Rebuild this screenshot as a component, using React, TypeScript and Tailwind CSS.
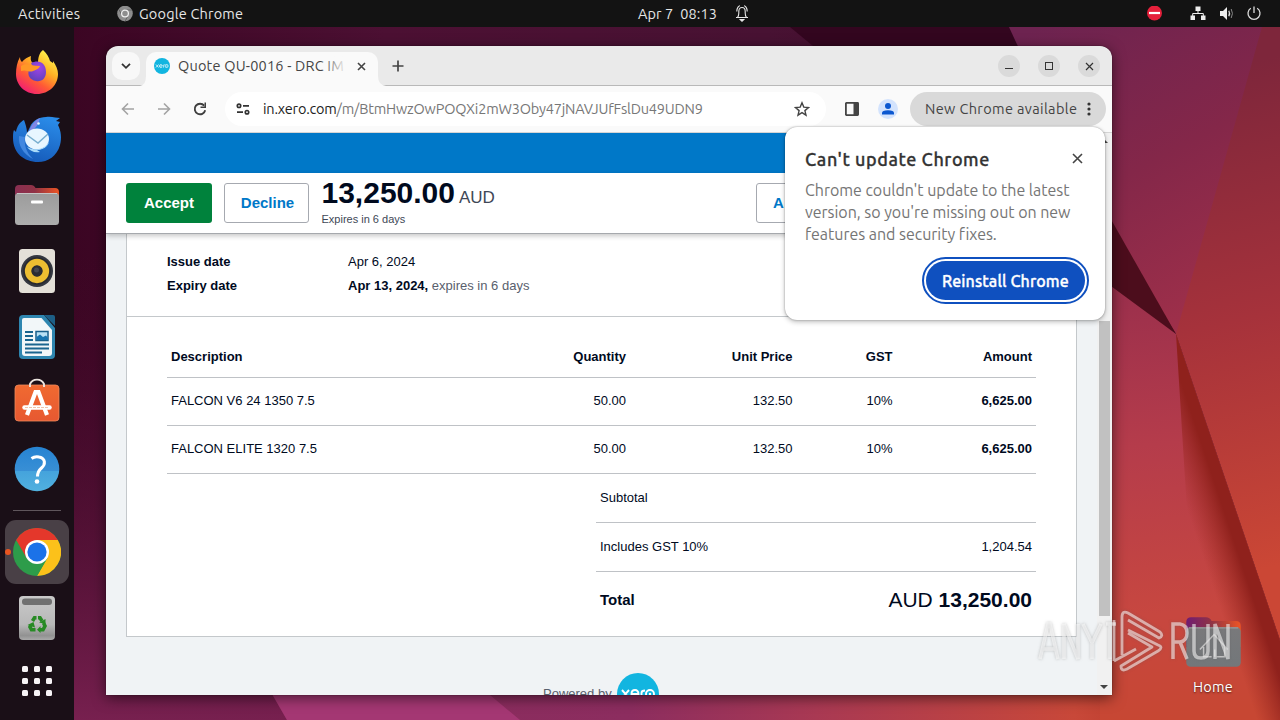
import React from "react";

const UI = "font-['Ubuntu','Noto_Sans',sans-serif]";

function Wallpaper() {
  return (
    <svg className="absolute inset-0" width="1280" height="720" viewBox="0 0 1280 720">
      <defs>
        <linearGradient id="wb" x1="0" y1="0" x2="1280" y2="0" gradientUnits="userSpaceOnUse">
          <stop offset="0" stopColor="#37031f" />
          <stop offset=".3" stopColor="#4c1033" />
          <stop offset=".6" stopColor="#481233" />
          <stop offset="1" stopColor="#3a0a22" />
        </linearGradient>
        <linearGradient id="wl" x1="0" y1="250" x2="0" y2="720" gradientUnits="userSpaceOnUse">
          <stop offset="0" stopColor="#400a29" stopOpacity="0" />
          <stop offset="1" stopColor="#77204f" />
        </linearGradient>
        <linearGradient id="wbot" x1="250" y1="0" x2="1280" y2="0" gradientUnits="userSpaceOnUse">
          <stop offset="0" stopColor="#882b5c" />
          <stop offset=".37" stopColor="#8c2d5f" />
          <stop offset=".55" stopColor="#a93953" />
          <stop offset=".8" stopColor="#c84839" />
          <stop offset="1" stopColor="#a22814" />
        </linearGradient>
        <linearGradient id="wtr" x1="1040" y1="27" x2="1200" y2="330" gradientUnits="userSpaceOnUse">
          <stop offset="0" stopColor="#6d2350" />
          <stop offset=".5" stopColor="#842749" />
          <stop offset="1" stopColor="#a0304a" />
        </linearGradient>
        <linearGradient id="wr" x1="1180" y1="80" x2="1300" y2="560" gradientUnits="userSpaceOnUse">
          <stop offset="0" stopColor="#7e263b" />
          <stop offset=".5" stopColor="#a6323b" />
          <stop offset="1" stopColor="#cb4735" />
        </linearGradient>
        <linearGradient id="wf" x1="1110" y1="300" x2="1150" y2="720" gradientUnits="userSpaceOnUse">
          <stop offset="0" stopColor="#9c304c" />
          <stop offset=".35" stopColor="#b53c4b" />
          <stop offset=".75" stopColor="#c74740" />
          <stop offset="1" stopColor="#c74733" />
        </linearGradient>
        <linearGradient id="wd" x1="1184" y1="501" x2="1217" y2="490" gradientUnits="userSpaceOnUse">
          <stop offset="0" stopColor="#a02c22" stopOpacity="0" />
          <stop offset="1" stopColor="#8f211c" />
        </linearGradient>
      </defs>
      <rect width="1280" height="720" fill="url(#wb)" />
      <rect width="300" height="720" fill="url(#wl)" />
      <path d="M790 27H1010L1025 60H830Z" fill="#33061f" />
      <path d="M264 680H1280V720H287Z" fill="url(#wbot)" />
      <path d="M264 680L287 720H520L472 680Z" fill="#a43773" />
      <path d="M1009 27H1280V500L1176 334L1080 180Z" fill="url(#wtr)" />
      <path d="M1262 27H1280V640L1176 334Z" fill="url(#wr)" />
      <path d="M1100 200L1176 334L1100 285Z" fill="#4c0d1c" />
      <path d="M1100 278L1176 334L1307 720H1100Z" fill="url(#wf)" />
      <path d="M1176 334L1307 720H1200Z" fill="url(#wd)" />
    </svg>
  );
}

function TopBar() {
  return (
    <header className={`relative flex h-[27px] shrink-0 items-center bg-[#131313] text-[14.5px] text-[#e6e6e6] ${UI}`}>
      <span className="ml-[18px] w-[99px] tracking-[0.3px]">Activities</span>
      <svg width="16" height="16" viewBox="0 0 16 16" className="mr-[6px]">
        <circle cx="8" cy="7.5" r="7.8" fill="#8d8d8d" />
        <path d="M8 4H15M5 9.500L2 3.500M11 9.500L8 15.500" stroke="#666" strokeWidth="1" />
        <circle cx="8" cy="7.500" r="3.400" fill="#8d8d8d" stroke="#eee" strokeWidth="1.3" />
      </svg>
      <span className="w-[499px] tracking-[0.2px]">Google Chrome</span>
      <span className="w-[96px] whitespace-pre tracking-[0.1px]">Apr 7  08:13</span>
      <svg width="16" height="18" viewBox="0 0 16 18" fill="none" stroke="#e8e8e8" strokeWidth="1.1">
        <path d="M2 12.500H14M3.500 12.500Q4.800 11 4.800 8V6.500C4.800 4 6 2.500 8 2.500S11.200 4 11.200 6.500V8Q11.200 11 12.500 12.500M2.800 6.500C2.800 2.500 5 .9 6 .8M13.200 6.500C13.200 2.500 11 .9 10 .8" />
        <path d="M6.200 14.500h3.600L8 16.300Z" fill="#e8e8e8" />
      </svg>
      <svg className="ml-auto mr-[28px]" width="16" height="16" viewBox="0 0 16 16">
        <circle cx="8.500" cy="7" r="7.500" fill="#e5203b" />
        <rect x="3" y="5.900" width="11" height="2.200" fill="#fff" />
      </svg>
      <svg className="mr-[13px]" width="16" height="16" viewBox="0 0 16 16" fill="#eee">
        <path d="M5.500 .5h5V5h-5zM.5 9.500h4.500V14H.5zM11 9.500H15.500V14H11z" />
        <path d="M8 4v3.500M2.700 10V7.500H13.300V10" fill="none" stroke="#eee" />
      </svg>
      <svg className="mr-[11px]" width="16" height="16" viewBox="0 0 16 16" fill="none">
        <path d="M1 5H4L8 1V14L4 10H1Z" fill="#eee" />
        <path d="M9.800 4.800q1.500 2.700 0 5.400" stroke="#ddd" strokeWidth="1.300" />
        <path d="M12.200 3q2.500 4.500 0 9" stroke="#888" />
      </svg>
      <svg className="mr-[18px]" width="16" height="16" viewBox="0 0 16 16" fill="none" stroke="#ddd" strokeWidth="1.300">
        <path d="M8 .5V7M4.800 2.300A6 6 0 1 0 11.200 2.300" />
      </svg>
    </header>
  );
}

function Firefox() {
  return (
    <svg width="48" height="48" viewBox="0 0 48 48">
      <defs>
        <linearGradient id="ff" x1="38" y1="6" x2="12" y2="44" gradientUnits="userSpaceOnUse">
          <stop offset="0" stopColor="#fff04a" />
          <stop offset=".35" stopColor="#ffae24" />
          <stop offset=".65" stopColor="#ff5a35" />
          <stop offset="1" stopColor="#f01a78" />
        </linearGradient>
        <radialGradient id="fp" cx=".6" cy=".3" r=".8">
          <stop offset="0" stopColor="#a044e8" />
          <stop offset="1" stopColor="#5941b8" />
        </radialGradient>
      </defs>
      <path d="M30 1C34 5 36 8 37 12C40 14 40 15 40 12C43 16 45 21 45 25C45 36 36 45 24 45C12 45 3 36 3 25C3 19 4 13 7 8C7 11 8 12 9 13C11 10 15 8 18 7C17 12 19 14 22 15L25 15C25 9 26 4 30 1Z" fill="url(#ff)" />
      <path d="M18 14C26 10 33 14 33 23C33 30 28 33 23 32C17 31 14 26 16 21C19 23 23 21 25 19C21 19 19 17 18 14Z" fill="url(#fp)" />
      <path d="M8 17C13 13 18 17 27 17C26 20 22 21 20 22C17 24 13 20 8 22Z" fill="#ff9826" />
    </svg>
  );
}

function Thunderbird() {
  return (
    <svg width="50" height="50" viewBox="0 0 50 50">
      <defs>
        <linearGradient id="tb" x1="30" y1="2" x2="15" y2="48" gradientUnits="userSpaceOnUse">
          <stop offset="0" stopColor="#2a8be8" />
          <stop offset="1" stopColor="#1559b8" />
        </linearGradient>
      </defs>
      <path d="M18 13C20 7 27 3 34 3C39 2 45 4 48 4L44 7L48 8L46 11C49 17 50 24 48 31C45 42 36 48 26 48C12 48 1 39 1 24C1 21 1 18 2 16L4 18C5 12 8 8 12 6C13 9 15 14 15 19Z" fill="url(#tb)" />
      <path d="M17 17C19 11 23 6 28 4L26 10C24 14 20 17 17 17Z" fill="#7f86e6" />
      <path d="M7 22C6 31 11 40 21 45C14 38 12 31 13 23Z" fill="#4288e0" />
      <ellipse cx="25" cy="25" rx="12" ry="10.500" fill="#e8f6ff" />
      <path d="M15 33C23 37 32 36 37 28C36 33 30 36 25 36L28 38C22 39 18 37 15 33Z" fill="#a8daf9" />
      <path d="M15 21L26 29L36 20" fill="none" stroke="#78aecf" strokeWidth="1.500" />
      <circle cx="26.500" cy="9.500" r="1.300" fill="#dff1ff" />
    </svg>
  );
}

function Folder({ home = false }: { home?: boolean }) {
  const id = home ? "fh" : "fd";
  return (
    <svg width={home ? 57 : 46} height={home ? 52 : 42} viewBox="0 0 46 42">
      <defs>
        <linearGradient id={id}><stop stopColor={home ? "#701c73" : "#892f52"} /><stop offset=".45" stopColor="#903246" /><stop offset="1" stopColor="#ed5524" /></linearGradient>
        <linearGradient id={id + "b"} x1="0" y1="0" x2="0" y2="1"><stop stopColor={home ? "#79797b" : "#9c9c9c"} /><stop offset="1" stopColor={home ? "#73777a" : "#adadad"} /></linearGradient>
      </defs>
      <path d="M1 5Q1 1 5 1H17Q20 1 21.500 4H41Q45 4 45 8V25H1Z" fill={`url(#${id})`} />
      <rect x="1" y="9" width="44" height="32" rx="3.500" fill={`url(#${id}b)`} />
      <path d="M3 9.500H43" stroke={home ? "#9b9b9b" : "#c6c6c6"} strokeWidth="1" />
      {home ? (
        <path d="M12 27L23.500 15L34.500 27M15 25V33H21.500M25.500 33H32V25M24 33V27" stroke="#c3c3c3" strokeWidth="1.200" fill="none" />
      ) : (
        <rect x="17" y="16.500" width="12" height="3" rx="1" fill="#fff" />
      )}
    </svg>
  );
}

function Rhythmbox() {
  return (
    <svg width="38" height="46" viewBox="0 0 38 46">
      <rect x="1" y="1" width="36" height="44" rx="3.500" fill="#e4e0d8" />
      <circle cx="19" cy="23" r="16" fill="#343740" />
      <circle cx="19" cy="23" r="13.800" fill="#28292f" />
      <circle cx="19" cy="23" r="8.900" fill="none" stroke="#ecbd31" strokeWidth="6.500" />
      <circle cx="19" cy="23" r="5.300" fill="#2a2c33" />
      <circle cx="18.500" cy="22" r="2.500" fill="#444650" />
    </svg>
  );
}

function Writer() {
  return (
    <svg width="38" height="46" viewBox="0 0 38 46">
      <path d="M5 1H26L37 14V41Q37 45 33 45H5Q1 45 1 41V5Q1 1 5 1Z" fill="#2e86b0" />
      <path d="M26 1H35Q37 1 37 3V12Z" fill="#1d5f86" />
      <path d="M6 4H23.500L34 16V39Q34 42 31 42H7Q4 42 4 39V6Q4 4 6 4Z" fill="#f2f7f9" />
      <path d="M7 18H15M7 22H15M7 26H15M7 30.500H31M7 34.500H31M7 38.500H24" stroke="#1a658f" strokeWidth="1.900" />
      <rect x="18" y="17.500" width="12" height="9" fill="#b9e1f5" stroke="#195f8b" strokeWidth="1.500" />
      <path d="M18.500 26V23L22 20.500L25 23L28 21.500L30 24V26Z" fill="#1975b0" />
    </svg>
  );
}

function Software() {
  return (
    <svg width="46" height="44" viewBox="0 0 46 44">
      <defs><linearGradient id="sw" x1="0" y1="0" x2="0" y2="1"><stop stopColor="#f06a31" /><stop offset="1" stopColor="#e75831" /></linearGradient></defs>
      <rect x="1" y="7" width="44" height="36" rx="3.500" fill="url(#sw)" stroke="#ef8a5e" strokeWidth=".8" />
      <path d="M16 9V6Q18 1.600 23 1.600T30 6V9" stroke="#ece5df" strokeWidth="1.900" fill="none" />
      <path d="M13 37L21.500 14H24.500L33 37" fill="none" stroke="#fff" strokeWidth="4.200" />
      <path d="M10.500 29.500H35.500" stroke="#fff" strokeWidth="4.500" strokeLinecap="round" />
      <path d="M11 29.500H35" stroke="#edb496" strokeWidth=".8" strokeDasharray="3 1" />
    </svg>
  );
}

function Help() {
  return (
    <svg width="46" height="46" viewBox="0 0 46 46">
      <defs><linearGradient id="hp" x1="0" y1="0" x2="0" y2="1"><stop stopColor="#2683d2" /><stop offset=".54" stopColor="#388fd5" /><stop offset=".55" stopColor="#45a3dc" /><stop offset="1" stopColor="#51b1df" /></linearGradient></defs>
      <circle cx="23" cy="23" r="22.300" fill="url(#hp)" />
      <path d="M17.500 12.500Q21 10 25 11C32 12.500 31.500 18.500 27.500 22Q23.500 25.500 23.500 30.500" fill="none" stroke="#fff" strokeWidth="3" />
      <circle cx="23" cy="35.500" r="2.300" fill="#fff" />
    </svg>
  );
}

function ChromeLogo() {
  return (
    <svg width="48" height="48" viewBox="0 0 48 48">
      <circle cx="24" cy="24" r="24" fill="#2d9c4a" />
      <path d="M24 24L3.200 12A24 24 0 0 1 44.800 12Z" fill="#e4372b" />
      <path d="M24 12H44.800A24 24 0 0 1 24 48L34.400 30Z" fill="#fcc11a" />
      <path d="M3.200 12L13.600 30L24 12Z" fill="#e4372b" />
      <path d="M13.600 30L24 48L34.400 30Z" fill="#2d9c4a" />
      <circle cx="24" cy="24" r="12" fill="#fff" />
      <circle cx="24" cy="24" r="9.600" fill="#1b72e8" />
    </svg>
  );
}

function Trash() {
  return (
    <svg width="38" height="46" viewBox="0 0 38 46">
      <defs><linearGradient id="tr" x1="0" y1="0" x2="0" y2="1"><stop stopColor="#c9c9c9" /><stop offset=".65" stopColor="#b8b8b8" /><stop offset=".9" stopColor="#929292" /><stop offset="1" stopColor="#a9a9a9" /></linearGradient></defs>
      <rect x="1" y="1" width="36" height="44" rx="4" fill="url(#tr)" />
      <rect x="4" y="3.500" width="30" height="6.500" rx="3" fill="#707070" />
      <g fill="none" stroke="#278a24" strokeWidth="3.600">
        <path d="M14.500 26L16.500 22.800H18.500M20 22.800H22L24 26" />
        <path d="M25.500 28L27 31L25 34.800H22" />
        <path d="M17.500 34.800H13.500L12 32L13 30" />
      </g>
      <path d="M21 27.500L27.500 24V29ZM22.500 31V38L19 34.800ZM9.500 30L15.500 27L17 32.500Z" fill="#278a24" />
    </svg>
  );
}

function Dock() {
  return (
    <nav className="relative flex w-[74px] shrink-0 flex-col items-center bg-[#1a0f17]">
      <div className="mt-[22px] flex h-[48px] items-center"><Firefox /></div>
      <div className="mt-[17px] flex h-[50px] items-center"><Thunderbird /></div>
      <div className="mt-[20px] flex h-[42px] items-center"><Folder /></div>
      <div className="mt-[22px] flex h-[46px] items-center"><Rhythmbox /></div>
      <div className="mt-[20px] flex h-[46px] items-center"><Writer /></div>
      <div className="mt-[18px] flex h-[44px] items-center"><Software /></div>
      <div className="mt-[24px] flex h-[46px] items-center"><Help /></div>
      <div className="mt-[18px] h-px w-[48px] bg-[#5f565c]" />
      <div className="relative mt-[9px] flex h-[64px] w-[64px] items-center justify-center rounded-[11px] bg-[#494046]">
        <ChromeLogo />
        <span className="absolute left-0 top-[29px] h-[6px] w-[6px] rounded-full bg-[#e95420]" />
      </div>
      <div className="mt-[11px] flex h-[46px] items-center"><Trash /></div>
      <div className="mt-[25px] grid grid-cols-3 gap-[6px]">
        {Array.from({ length: 9 }, (_, i) => (
          <span key={i} className="h-[6px] w-[6px] rounded-[1.5px] bg-[#f7f3f6]" />
        ))}
      </div>
    </nav>
  );
}

function XeroIcon({ size }: { size: number }) {
  return (
    <svg width={size} height={size} viewBox="0 0 42 42" className="shrink-0">
      <circle cx="21" cy="21" r="21" fill="#12b5e0" />
      <g fill="none" stroke="#fff" strokeWidth="1.900">
        <path d="M5 17L12 25M12 17L5 25M14.500 21H21.500C21.500 15.500 14.500 16 14.500 21C14.500 26 19 26 21 23.500M24.500 25.500V20Q24.500 17.500 28 17.500" />
        <circle cx="33" cy="21" r="4" />
      </g>
      <circle cx="33" cy="21" r="1.200" fill="#fff" />
    </svg>
  );
}

function Cross({ size, color = "#444", sw = 1.6 }: { size: number; color?: string; sw?: number }) {
  return (
    <svg width={size} height={size} viewBox={`0 0 ${size} ${size}`} stroke={color} strokeWidth={sw}>
      <path d={`M1 1L${size - 1} ${size - 1}M${size - 1} 1L1 ${size - 1}`} />
    </svg>
  );
}

function TabStrip() {
  return (
    <div className={`flex h-[40px] shrink-0 border-b border-[#b9b9b9] bg-[#eaeaea] ${UI}`}>
      <div className="ml-[6px] mt-[6px] flex h-[28px] w-[28px] items-center justify-center rounded-[10px] bg-[#f8f8f8]">
        <svg width="10" height="8" viewBox="0 0 10 8" fill="none" stroke="#333" strokeWidth="1.800"><path d="M1 1.800L5 5.800L9 1.800" /></svg>
      </div>
      <svg className="mt-[30px]" width="6" height="10" viewBox="0 0 6 10" fill="#fafafa"><path d="M6 0V10H0Q6 9 6 0Z" /></svg>
      <div className="mt-[6px] flex h-[34px] w-[232px] items-center rounded-t-[10px] bg-[#fafafa] pb-[6px]">
        <div className="ml-[8px]"><XeroIcon size={16} /></div>
        <div className="relative ml-[8px] h-[22px] w-[169px] whitespace-nowrap text-[14.5px] leading-[22px] tracking-[0.2px] text-[#444]">
          Quote QU-0016 - DRC IM
          <span className="absolute inset-y-0 right-0 w-[26px] bg-gradient-to-r from-[#fafafa00] to-[#fafafa]" />
        </div>
        <div className="ml-[10px]"><Cross size={9} /></div>
      </div>
      <svg className="mt-[30px]" width="8" height="10" viewBox="0 0 8 10" fill="#fafafa"><path d="M0 0V10H8Q0 9 0 0Z" /></svg>
      <svg className="ml-[6px] mt-[14px]" width="12" height="12" viewBox="0 0 12 12" stroke="#444" strokeWidth="1.700"><path d="M6 .5V11.500M.5 6H11.500" /></svg>
      <div className="ml-auto mr-[12px] mt-[9px] flex gap-[18px]">
        <span className="flex h-[22px] w-[22px] items-center justify-center rounded-full bg-[#dadada]"><span className="mt-[5px] h-px w-[8px] bg-[#333]" /></span>
        <span className="flex h-[22px] w-[22px] items-center justify-center rounded-full bg-[#dadada]"><span className="h-[8px] w-[8px] border border-[#333]" /></span>
        <span className="flex h-[22px] w-[22px] items-center justify-center rounded-full bg-[#dadada]"><Cross size={9} color="#333" sw={1.2} /></span>
      </div>
    </div>
  );
}

function Toolbar() {
  return (
    <div className={`flex h-[47px] shrink-0 items-center border-b border-[#d5d5d5] bg-[#fafafa] ${UI}`}>
      <svg className="ml-[14px]" width="16" height="16" viewBox="0 0 16 16" fill="none" stroke="#a3a3a3" strokeWidth="1.600"><path d="M14 8H3M8 2.500L2.500 8L8 13.500" /></svg>
      <svg className="ml-[20px]" width="16" height="16" viewBox="0 0 16 16" fill="none" stroke="#a3a3a3" strokeWidth="1.600"><path d="M2 8H13M8 2.500L13.500 8L8 13.500" /></svg>
      <svg className="ml-[20px]" width="16" height="16" viewBox="0 0 16 16" fill="none" stroke="#3f3f3f" strokeWidth="1.900"><path d="M13.200 9.200A5.300 5.300 0 1 1 12.200 4.700" /><path d="M14 1.500V7H8.500V5.500H12.500V1.500Z" fill="#3f3f3f" stroke="none" /></svg>
      <div className="ml-[17px] flex h-[34px] w-[601px] items-center rounded-full bg-white">
        <svg className="ml-[10px]" width="16" height="16" viewBox="0 0 16 16" fill="none" stroke="#333" strokeWidth="1.700"><circle cx="4" cy="4.800" r="1.700" /><path d="M8 4.800H14M2 11.200H8" /><circle cx="12" cy="11.200" r="1.700" /></svg>
        <span className="ml-[12px] whitespace-nowrap text-[14.5px] tracking-[-0.19px] text-[#222]">in.xero.com<span className="text-[#777]">/m/BtmHwzOwPOQXi2mW3Oby47jNAVJUfFslDu49UDN9</span></span>
        <svg className="ml-auto mr-[16px]" width="16" height="16" viewBox="0 0 16 16" fill="none" stroke="#444" strokeWidth="1.400"><path d="M8 1.800L9.800 6.100L14.500 6.500L10.900 9.600L12 14.200L8 11.700L4 14.200L5.100 9.600L1.500 6.500L6.200 6.100Z" /></svg>
      </div>
      <svg className="ml-[19px]" width="14" height="14" viewBox="0 0 14 14" fill="none"><rect x=".9" y=".9" width="12.200" height="12.200" rx=".5" stroke="#444" strokeWidth="1.800" /><path d="M8.500 1H13V13H8.500Z" fill="#444" /></svg>
      <svg className="ml-[19px]" width="20" height="20" viewBox="0 0 20 20"><circle cx="10" cy="10" r="10" fill="#d3e3fd" /><circle cx="10" cy="7" r="3" fill="#0b57d0" /><path d="M4 15.500V14Q4 11.200 10 11.200T16 14V15.500Z" fill="#0b57d0" /></svg>
      <div className="ml-[12px] flex h-[34px] w-[196px] items-center rounded-full bg-[#d9d9d9] pl-[15px] text-[14.5px] text-[#444]">
        <span className="whitespace-nowrap tracking-[0.37px]">New Chrome available</span>
        <svg className="ml-auto mr-[15px]" width="4" height="16" viewBox="0 0 4 16" fill="#333"><circle cx="2" cy="3" r="1.600" /><circle cx="2" cy="8" r="1.600" /><circle cx="2" cy="13" r="1.600" /></svg>
      </div>
    </div>
  );
}

const items = [
  { name: "FALCON V6 24 1350 7.5", qty: "50.00", price: "132.50", gst: "10%", amount: "6,625.00" },
  { name: "FALCON ELITE 1320 7.5", qty: "50.00", price: "132.50", gst: "10%", amount: "6,625.00" },
];

const cols = "grid grid-cols-[332px_123px_166.5px_100px_143.5px] items-center border-b border-[#bfc2c6] pl-[4px]";

function Quote() {
  return (
    <div className="ml-[20px] flex h-[403px] w-[951px] shrink-0 flex-col border border-t-0 border-[#c4c8cb] bg-white">
      <div className="h-[83px] border-b border-[#c4c8cb] pl-[40px] pt-[16px] leading-[24px]">
        <div className="flex"><b className="w-[181px]">Issue date</b><span>Apr 6, 2024</span></div>
        <div className="flex"><b className="w-[181px]">Expiry date</b><span><b>Apr 13, 2024,</b> <span className="text-[#59606d]">expires in 6 days</span></span></div>
      </div>
      <div className="ml-[40px] w-[869px]">
        <div className={`${cols} mt-[18px] h-[43px] pt-[2px] text-right font-bold`}>
          <span className="text-left">Description</span><span>Quantity</span><span>Unit Price</span><span>GST</span><span className="pr-[4px]">Amount</span>
        </div>
        {items.map((it) => (
          <div key={it.name} className={`${cols} h-[48px] pb-px text-right`}>
            <span className="text-left">{it.name}</span><span>{it.qty}</span><span>{it.price}</span><span>{it.gst}</span><b className="pr-[4px]">{it.amount}</b>
          </div>
        ))}
        <div className="ml-auto w-[440px]">
          <div className="flex h-[49px] items-center border-b border-[#bfc2c6] px-[4px]">Subtotal</div>
          <div className="flex h-[49px] items-center justify-between border-b border-[#bfc2c6] px-[4px]"><span>Includes GST 10%</span><span>1,204.54</span></div>
          <div className="flex h-[56px] items-center justify-between px-[4px]"><b className="text-[15px]">Total</b><span className="text-[21px]">AUD <b>13,250.00</b></span></div>
        </div>
      </div>
    </div>
  );
}

function Page() {
  return (
    <div className="flex min-h-0 grow font-['Liberation_Sans',sans-serif] text-[13px] text-[#000a1e]">
      <main className="flex w-[991px] flex-col overflow-hidden bg-[#f0f3f5]">
        <div className="h-[40px] shrink-0 bg-[#0078c8]" />
        <div className="relative z-10 flex h-[61px] shrink-0 border-b border-[#a6a9ad] bg-white pl-[20px] pt-[10px] shadow-[0_2px_5px_rgba(0,0,0,.22)]">
          <button className="h-[40px] w-[86px] rounded-[3px] bg-[#00823c] text-[15px] font-bold text-white">Accept</button>
          <button className="ml-[12px] h-[40px] w-[85px] rounded-[3px] border border-[#a6a9b0] pl-[2px] text-[15px] font-bold text-[#0078c8]">Decline</button>
          <div className="-mt-[8px] ml-[12.5px] w-[434.5px]">
            <div className="h-[36px] whitespace-nowrap leading-[36px]"><b className="text-[30px]">13,250.00</b><span className="ml-[4px] text-[17px] text-[#404756]">AUD</span></div>
            <div className="text-[11px] leading-[16px] text-[#404756]">Expires in 6 days</div>
          </div>
          <button className="h-[40px] w-[90px] rounded-[3px] border border-[#a6a9b0] pl-[16px] text-left text-[15px] font-bold text-[#0078c8]">A</button>
        </div>
        <Quote />
        <div className="ml-[437px] mt-[36px] flex h-[42px] shrink-0 items-center gap-[5px] text-[#59606d]">Powered by<XeroIcon size={42} /></div>
      </main>
      <div className="flex w-[15px] flex-col items-center bg-[#f1f1f1]">
        <svg className="mt-[5px]" width="9" height="6" viewBox="0 0 9 6" fill="#444"><path d="M0 5H8L4 1Z" /></svg>
        <div className="mt-[177px] h-[295px] w-[11px] bg-[#c1c1c1]" />
        <svg className="mb-[5px] mt-auto" width="9" height="6" viewBox="0 0 9 6" fill="#444"><path d="M0 1H8L4 5Z" /></svg>
      </div>
    </div>
  );
}

function UpdateDialog() {
  return (
    <div className={`absolute left-[679px] top-[81px] z-20 h-[193px] w-[320px] rounded-[12px] bg-white px-[20px] pt-[20px] shadow-[0_0_2px_rgba(0,0,0,.35),0_2px_5px_rgba(0,0,0,.25)] ${UI}`}>
      <div className="flex h-[25px] items-center justify-between">
        <h2 className="text-[18px] font-medium tracking-[0.55px] text-[#333] [-webkit-text-stroke:0.3px]">Can't update Chrome</h2>
        <div className="mr-[2px] pb-[2px]"><Cross size={11} /></div>
      </div>
      <p className="mt-[7px] whitespace-pre text-[16px] leading-[22px] tracking-[-0.03px] text-[#757575]">{"Chrome couldn't update to the latest\nversion, so you're missing out on new\nfeatures and security fixes."}</p>
      <button className="ml-[121px] mt-[16px] h-[39px] w-[159px] whitespace-nowrap rounded-full bg-[#0f50bf] text-[16px] font-medium tracking-[0.12px] text-white outline-2 outline-offset-2 outline-[#0f50bf] [-webkit-text-stroke:0.35px]">Reinstall Chrome</button>
    </div>
  );
}

function Watermark() {
  return (
    <svg className="absolute left-[1030px] top-[600px] z-30" width="215" height="80" viewBox="0 0 215 80" fill="none" stroke="#fff" strokeOpacity=".55" strokeWidth="3.500">
      <g style={{ filter: "drop-shadow(0 0 1.5px rgba(90,90,90,.6))" }}>
        <path d="M10 59L18 24H20L28 59M12 49H26M34 59V24L48 59V24M53 24L62 43L71 24M62 43V59M76 24H86M80 24V59" />
        <path d="M92 55V17Q92 10 98 13L130 32Q134 36 129 38L98 20M98 30L128 45Q134 47 128 51L97 69Q91 72 91 66L122 47L98 33M84 61L106 49M84 20V61" strokeWidth="2.800" strokeLinejoin="round" />
        <path d="M143 59V24H150Q157 25 157 33T150 42H143M150 42L157 59M164 24V51Q164 58 171 58T178 51V24M185 59V24L198 59V24" />
      </g>
    </svg>
  );
}

export default function App() {
  return (
    <div className="relative flex h-[720px] w-[1280px] flex-col overflow-hidden">
      <Wallpaper />
      <TopBar />
      <div className="flex min-h-0 grow">
        <Dock />
      </div>
      <section className="absolute left-[106px] top-[46px] h-[649px] w-[1006px] rounded-t-[12px] shadow-[0_3px_14px_rgba(0,0,0,.55),0_0_1px_#000]">
        <div className="flex h-full flex-col overflow-hidden rounded-t-[12px]">
          <TabStrip />
          <Toolbar />
          <Page />
        </div>
        <UpdateDialog />
      </section>
      <div className={`absolute left-[1178px] top-[616px] flex w-[70px] flex-col items-center text-[14.5px] text-white ${UI}`}>
        <Folder home />
        <span className="mt-[9px] leading-[20px] tracking-[0.2px] [text-shadow:0_1px_2px_rgba(0,0,0,.6)]">Home</span>
      </div>
      <Watermark />
    </div>
  );
}
